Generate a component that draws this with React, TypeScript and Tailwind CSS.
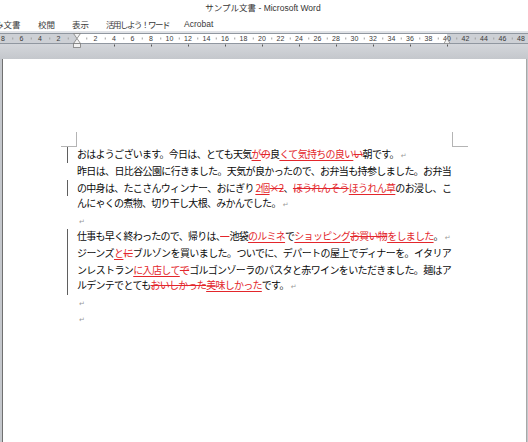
import React from "react";

const RED = "text-[#e3262b]";

function Ins({ children }: { children: React.ReactNode }) {
  return <span className={`${RED} underline decoration-[#e3262b] underline-offset-[2px]`}>{children}</span>;
}
function Del({ children }: { children: React.ReactNode }) {
  return <span className={`${RED} line-through decoration-[#e3262b]`}>{children}</span>;
}
function Mark() {
  return (
    <span className="text-[7px] text-[#9a9a9a] ml-[2px] tracking-normal" style={{ fontFamily: '"DejaVu Sans", sans-serif' }}>
      ↵
    </span>
  );
}

function Line({ bar, justify, children }: { bar?: boolean; justify?: boolean; children?: React.ReactNode }) {
  return (
    <div className="flex h-[16.4px] items-center">
      <div className={`ml-[6px] w-[10px] h-full ${bar ? "border-l border-[#5f5f5f]" : ""}`} />
      <div
        className={`w-[374px] leading-[16.4px] text-[10px] text-[#0a0a0a] ${
          justify ? "tracking-[-0.85px] text-justify [text-align-last:justify]" : "tracking-[-0.72px] whitespace-nowrap"
        }`}
      >
        {children}
      </div>
    </div>
  );
}

function Ruler() {
  const U = 9.25;
  const nums: number[] = [];
  for (let n = -8; n <= 48; n += 2) if (n !== 0) nums.push(n);
  const odd: number[] = [];
  for (let n = -9; n <= 49; n += 2) odd.push(n);
  const tabs: number[] = [];
  for (let n = 4; n <= 40; n += 4) tabs.push(n);
  return (
    <svg width="528" height="28" viewBox="0 0 528 28">
      <rect x="-1" y="2.5" width="530" height="10" fill="#cdd0d5" stroke="#9097a0" />
      <rect x="77" y="3" width="370" height="9" fill="#ffffff" />
      {odd.map((n) => (
        <line key={"o" + n} x1={77 + n * U + 0.5} x2={77 + n * U + 0.5} y1="6.5" y2="8.5" stroke="#a0a0a0" strokeWidth="1" />
      ))}
      {nums.map((n) => (
        <text
          key={n}
          x={77 + n * U}
          y="10.2"
          fontSize="7"
          textAnchor="middle"
          fill="#3a3a3a"
          fontFamily='"Liberation Sans", Arial, sans-serif'
        >
          {Math.abs(n)}
        </text>
      ))}
      {tabs.map((n) => (
        <line key={"t" + n} x1={77 + n * U + 0.5} x2={77 + n * U + 0.5} y1="13.5" y2="15.5" stroke="#555" strokeWidth="1" />
      ))}
      <polygon points="73.5,2.5 80.5,2.5 77,7.5" fill="#f2f2f2" stroke="#7d7d7d" strokeWidth="0.8" />
      <polygon points="77,7.5 73.5,12.5 80.5,12.5" fill="#f2f2f2" stroke="#7d7d7d" strokeWidth="0.8" />
      <rect x="73.5" y="12.5" width="7" height="4" fill="#f2f2f2" stroke="#7d7d7d" strokeWidth="0.8" />
      <polygon points="447,7 444,12.5 450,12.5" fill="#f2f2f2" stroke="#8a8a8a" strokeWidth="0.8" />
    </svg>
  );
}

export default function App() {
  return (
    <div
      className="w-[528px] h-[442px] overflow-hidden bg-white flex flex-col"
      style={{ fontFamily: '"Noto Sans CJK JP", "Noto Sans", sans-serif' }}
    >
      <div
        className="h-[17px] flex items-center justify-center text-[8.5px] text-[#333] pr-[2px]"
        style={{ fontFamily: '"Liberation Sans", "Noto Sans CJK JP", sans-serif' }}
      >
        サンプル文書 - Microsoft Word
      </div>
      <div className="h-[14px] flex items-center text-[8.5px] text-[#3a3a3a] overflow-hidden">
        <div className="w-[43px] shrink-0 ml-[-5px]">み文書</div>
        <div className="w-[34px] shrink-0">校閲</div>
        <div className="w-[34px] shrink-0">表示</div>
        <div className="w-[78px] shrink-0 tracking-[-1.5px]">活用しよう！ワード</div>
        <div className="shrink-0" style={{ fontFamily: '"Liberation Sans", sans-serif' }}>
          Acrobat
        </div>
      </div>
      <div className="h-[28px] bg-linear-to-b from-[#e2e4e8] to-[#c4c7cc]">
        <Ruler />
      </div>
      <div className="flex-1 flex bg-[#c4c7cc] pl-[2px] pr-[1px]">
        <div className="flex-1 bg-white border-l border-[#707070] border-r border-r-[#a8a8a8] pt-[73px] pl-[58px]">
          <div className="flex h-[15px]">
            <div className="w-[16px] border-r border-b border-[#b4b4b4]" />
            <div className="w-[375px]" />
            <div className="w-[16px] border-l border-b border-[#b4b4b4]" />
          </div>
          <Line bar>
            おはようございます。今日は、とても天気<Ins>が</Ins>
            <Del>の</Del>良<Ins>くて気持ちの良い</Ins>
            <Del>い</Del>朝です。
            <Mark />
          </Line>
          <Line justify>昨日は、日比谷公園に行きました。天気が良かったので、お弁当も持参しました。お弁当</Line>
          <Line bar justify>
            の中身は、たこさんウィンナー、おにぎり{" "}<Ins>2個</Ins>
            <Del>×2</Del>、<Del>ほうれんそう</Del>
            <Ins>ほうれん草</Ins>のお浸し、こ
          </Line>
          <Line>
            んにゃくの煮物、切り干し大根、みかんでした。
            <Mark />
          </Line>
          <Line>
            <Mark />
          </Line>
          <Line bar>
            仕事も早く終わったので、帰りは、<Del>　</Del>池袋<Ins>のルミネ</Ins>で<Ins>ショッピング</Ins>
            <Del>お買い物</Del>
            <Ins>をしました</Ins>。
            <Mark />
          </Line>
          <Line bar justify>
            ジーンズ<Ins>と</Ins>
            <Del>に</Del>ブルゾンを買いました。ついでに、デパートの屋上でディナーを。イタリア
          </Line>
          <Line bar justify>
            ンレストラン<Ins>に入店して</Ins>
            <Del>で</Del>ゴルゴンゾーラのパスタと赤ワインをいただきました。麺はア
          </Line>
          <Line bar>
            ルデンテでとても<Del>おいしかった</Del>
            <Ins>美味しかった</Ins>です。
            <Mark />
          </Line>
          <Line>
            <Mark />
          </Line>
          <Line>
            <Mark />
          </Line>
        </div>
      </div>
    </div>
  );
}
